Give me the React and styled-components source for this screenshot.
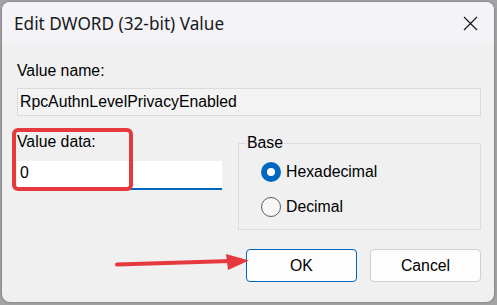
import React from "react";
import styled, { createGlobalStyle } from "styled-components";

const GlobalStyle = createGlobalStyle`
  html, body {
    margin: 0;
    padding: 0;
    background: #a4a4a4;
  }
  body {
    width: 497px;
    height: 305px;
    overflow: hidden;
    font-family: "Liberation Sans", Arial, sans-serif;
  }
`

const Stage = styled.div`
  position: relative;
  padding: 2px 3px 3px 2px;
`

const Dialog = styled.div`
  width: 492px;
  height: 300px;
  border-radius: 8px;
  overflow: hidden;
  background: #f0f0f0;
  display: flex;
  flex-direction: column;
  box-shadow: 0 0 3px rgba(0, 0, 0, 0.35);
`

const TitleBar = styled.div`
  height: 42px;
  flex-shrink: 0;
  background: #f3f3f8;
  display: flex;
  align-items: center;
  justify-content: space-between;
  padding: 0 16px 0 12px;
`

const Title = styled.div`
  font-family: "Noto Sans", "Open Sans", sans-serif;
  font-size: 17.2px;
  color: #1a1a1a;
`

const CloseIcon = styled.svg`
  width: 15px;
  height: 15px;
  display: block;
`

const Body = styled.div`
  flex: 1;
  display: flex;
  flex-direction: column;
  padding: 18px 13px 20px 15px;
`

const Label = styled.div`
  font-size: 15.8px;
  line-height: 18px;
  color: #000;
`

const NameField = styled.div`
  margin-top: 8px;
  height: 28px;
  box-sizing: border-box;
  border: 1px solid #dadada;
  background: #f3f3f3;
  padding-left: 2px;
  font-size: 15.8px;
  line-height: 26px;
  color: #000;
`

const Row = styled.div`
  display: flex;
  margin-top: 17px;
`

const DataColumn = styled.div`
  width: 205px;
  display: flex;
  flex-direction: column;
`

const DataInput = styled.div`
  margin-top: 10px;
  height: 29px;
  box-sizing: border-box;
  background: #fff;
  border-bottom: 2px solid #0067c0;
  padding-left: 3px;
  font-size: 15.8px;
  line-height: 24px;
  color: #000;
`

const Group = styled.fieldset`
  margin: 1px 0 0 16px;
  width: 243px;
  box-sizing: border-box;
  border: 1px solid #dcdcdc;
  padding: 0 0 12px 7px;
`

const Legend = styled.legend`
  padding: 0 1px;
  font-size: 15.8px;
  line-height: 18px;
  color: #000;
`

const RadioList = styled.div`
  display: flex;
  flex-direction: column;
  gap: 15px;
  margin-top: 10px;
  padding-left: 15px;
`

const RadioRow = styled.div`
  display: flex;
  align-items: center;
  height: 20px;
  font-size: 15.8px;
  line-height: 18px;
  color: #000;
`

const RadioDot = styled.span`
  width: 20px;
  height: 20px;
  box-sizing: border-box;
  border-radius: 50%;
  margin-right: 5px;
  display: flex;
  align-items: center;
  justify-content: center;
  background: ${(p) => (p.$checked ? "#0067c0" : "#f7f7f7")};
  border: ${(p) => (p.$checked ? "none" : "1px solid #5c5c5c")};

  &::after {
    content: "";
    display: ${(p) => (p.$checked ? "block" : "none")};
    width: 8px;
    height: 8px;
    border-radius: 50%;
    background: #fff;
  }
`

const ButtonRow = styled.div`
  margin-top: auto;
  display: flex;
  justify-content: flex-end;
  gap: 13px;
`

const Button = styled.button`
  width: 111px;
  height: 33px;
  box-sizing: border-box;
  border-radius: 4px;
  background: #fdfdfd;
  border: 1px solid ${(p) => (p.$primary ? "#0067c0" : "#d0d0d0")};
  font-family: "Liberation Sans", Arial, sans-serif;
  font-size: 15.8px;
  color: #000;
  padding: 0;
`

const Highlight = styled.div`
  position: absolute;
  left: 12px;
  top: 128px;
  width: 121px;
  height: 63px;
  box-sizing: border-box;
  border: 4px solid #e6393e;
  border-radius: 6px;
  pointer-events: none;
`

const Arrow = styled.svg`
  position: absolute;
  left: 0;
  top: 0;
  width: 497px;
  height: 305px;
  pointer-events: none;
`

const Radio = ({ checked, children }) => (
  <RadioRow>
    <RadioDot $checked={checked} />
    {children}
  </RadioRow>
)

const App = () => {
  return (
    <Stage>
      <GlobalStyle />
      <Dialog>
        <TitleBar>
          <Title>Edit DWORD (32-bit) Value</Title>
          <CloseIcon viewBox="0 0 15 15">
            <path d="M1 1 L14 14 M14 1 L1 14" stroke="#1a1a1a" strokeWidth="1.2" fill="none" />
          </CloseIcon>
        </TitleBar>
        <Body>
          <Label>Value name:</Label>
          <NameField>RpcAuthnLevelPrivacyEnabled</NameField>
          <Row>
            <DataColumn>
              <Label>Value data:</Label>
              <DataInput>0</DataInput>
            </DataColumn>
            <Group>
              <Legend>Base</Legend>
              <RadioList>
                <Radio checked>Hexadecimal</Radio>
                <Radio>Decimal</Radio>
              </RadioList>
            </Group>
          </Row>
          <ButtonRow>
            <Button $primary>OK</Button>
            <Button>Cancel</Button>
          </ButtonRow>
        </Body>
      </Dialog>
      <Highlight />
      <Arrow viewBox="0 0 497 305">
        <path d="M117 264.5 L231 261" stroke="#e6393e" strokeWidth="4" strokeLinecap="round" fill="none" />
        <path d="M226 254 L249 260.5 L228 270 Z" fill="#e6393e" />
      </Arrow>
    </Stage>
  );
}

export default App
